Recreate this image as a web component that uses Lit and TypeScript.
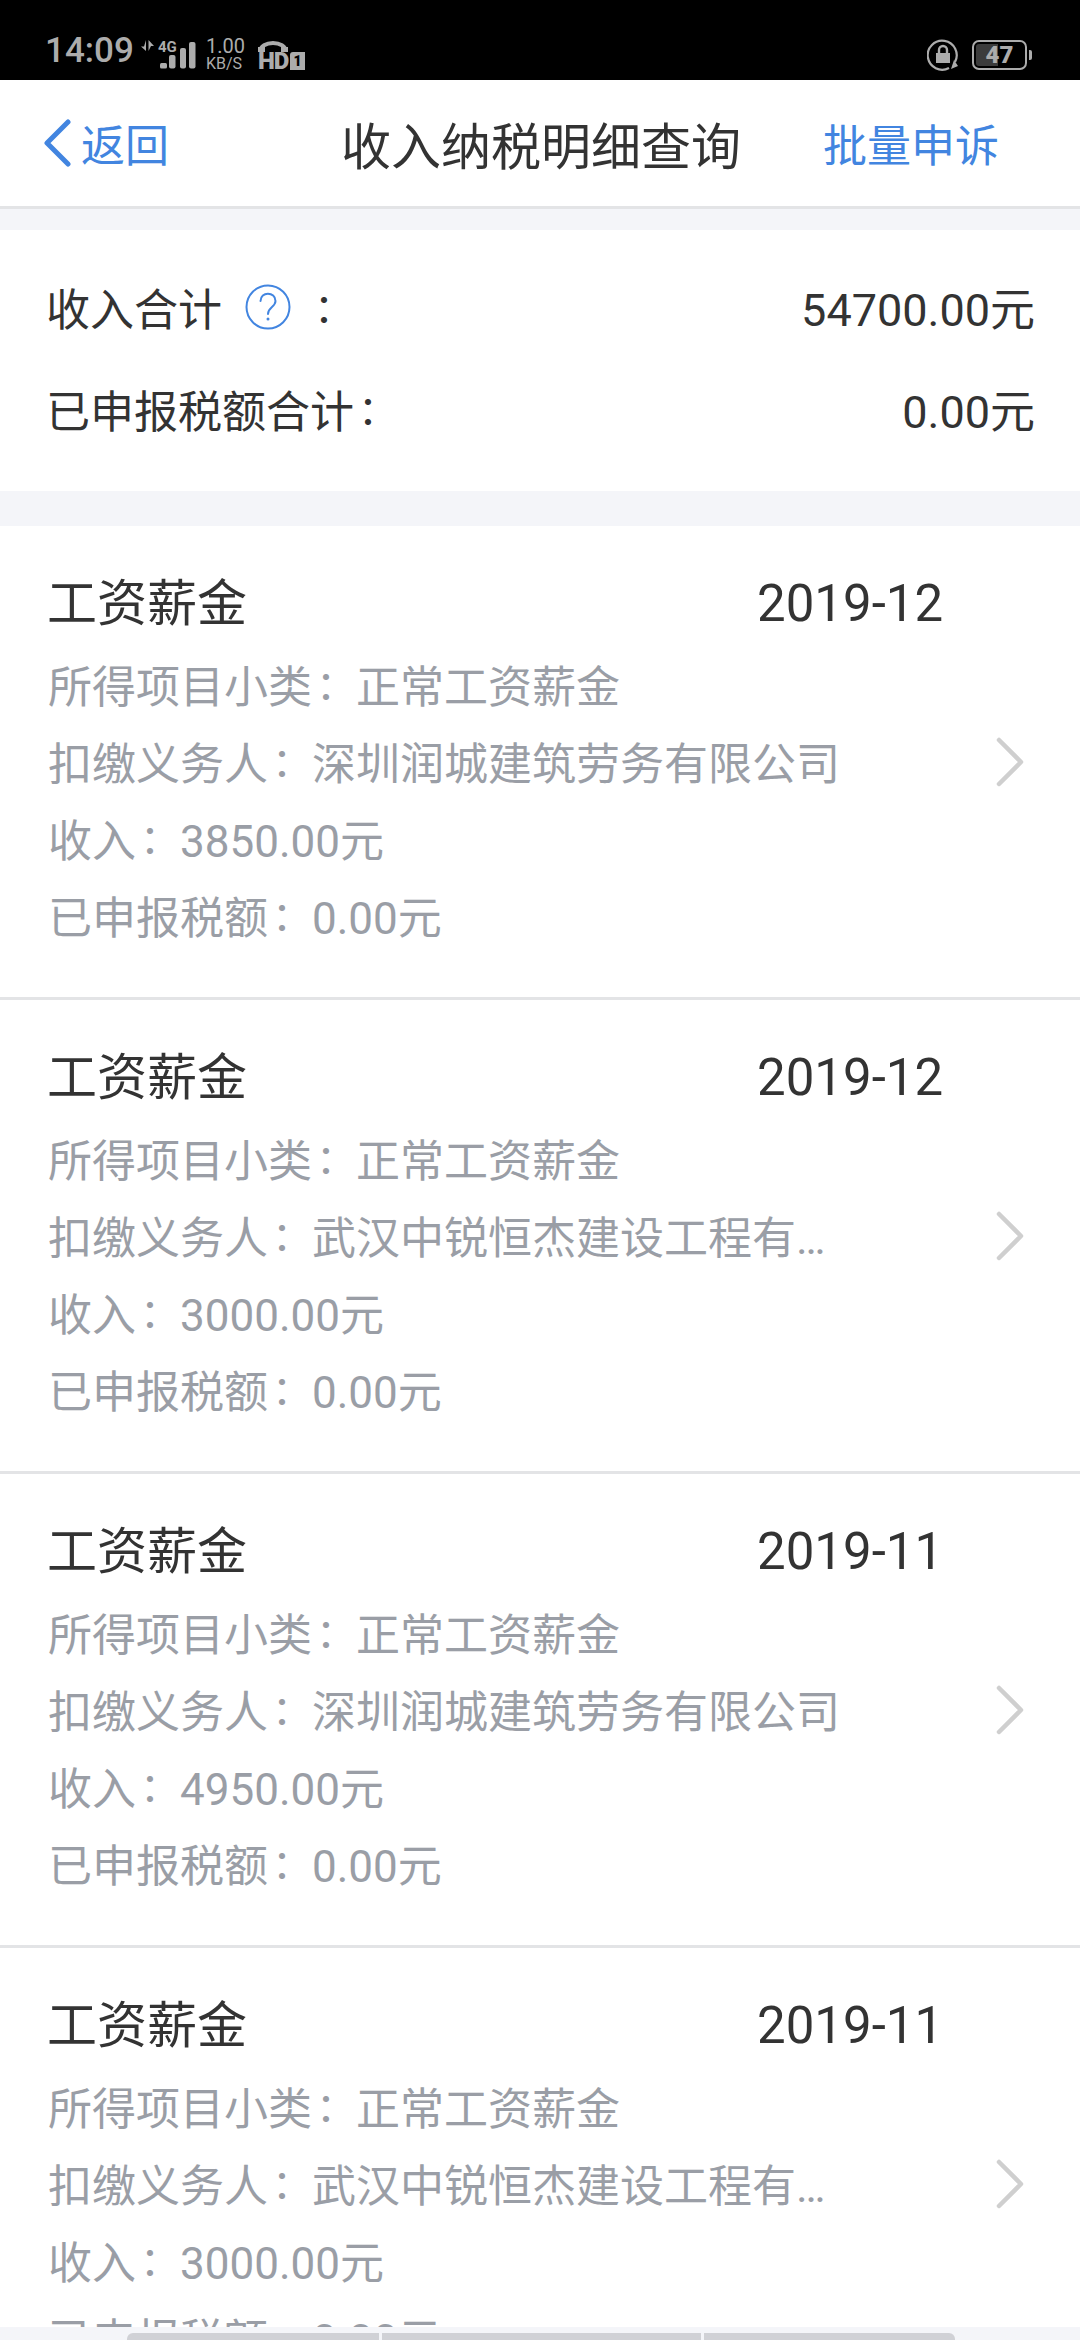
import { LitElement, html, css } from "lit";
import { customElement } from "lit/decorators.js";

interface Item { date: string; payer: string; income: string; }
const items: Item[] = [
  { date: "2019-12", payer: "深圳润城建筑劳务有限公司", income: "3850.00元" },
  { date: "2019-12", payer: "武汉中锐恒杰建设工程有限公司", income: "3000.00元" },
  { date: "2019-11", payer: "深圳润城建筑劳务有限公司", income: "4950.00元" },
  { date: "2019-11", payer: "武汉中锐恒杰建设工程有限公司", income: "3000.00元" },
];

@customElement("app-root")
export class AppRoot extends LitElement {
  static styles = css`
    :host {
      display: block; position: relative; width: 1080px; height: 2340px; overflow: hidden;
      background: #f4f5f9; color: #333;
      font-family: Roboto, "Noto Sans CJK SC", sans-serif;
    }
    .colon { font-size: 40px; margin-left: 4px; line-height: 1; vertical-align: 4px; }
    .colon-wrap { margin-top: 8px; }
    .status {
      height: 80px; background: #000; color: #acacac; display: flex; align-items: flex-end;
      justify-content: space-between; padding: 0 53px 0 45px; box-sizing: border-box;
    }
    .status-left { display: flex; align-items: flex-end; height: 80px; }
    .time { font-size: 35px; font-weight: 500; line-height: 40px; margin-bottom: 9px; width: 94px; }
    .signal { width: 60px; height: 32px; margin-bottom: 8px; position: relative; }
    .signal svg { display: block; }
    .four-g { position: absolute; left: 19px; top: -2px; font-size: 15px; font-weight: 700; line-height: 18px; }
    .speed { width: 42px; margin: 0 0 8px 7px; white-space: nowrap; }
    .speed div:first-child { font-size: 20px; line-height: 17px; }
    .speed div:last-child { font-size: 16px; line-height: 17px; }
    .hd { position: relative; width: 47px; height: 31px; margin: 0 0 10px 10px; }
    .hd-text { position: absolute; left: 0; bottom: -3px; font-size: 24px; font-weight: 900; line-height: 24px; letter-spacing: -1px; }
    .hd-arc { position: absolute; left: 0; top: 0; }
    .hd-sim {
      position: absolute; right: 0; bottom: 0; width: 15px; height: 18px; background: #acacac; color: #000;
      font-size: 14px; font-weight: 900; line-height: 18px; text-align: center; border-radius: 3px 0 0 0;
    }
    .status-right { display: flex; align-items: center; gap: 13px; height: 30px; margin-bottom: 10px; }
    .battery {
      position: relative; width: 55px; height: 30px; box-sizing: border-box; border: 2px solid #acacac;
      border-radius: 7px; text-align: center; font-size: 24px; font-weight: 900; line-height: 26px;
    }
    .battery-fill { position: absolute; left: 2px; top: 2px; bottom: 2px; width: 22px; background: #3c3c3c; border-radius: 3px 0 0 3px; }
    .battery-num { position: relative; }
    .battery-tip { position: absolute; right: -7px; top: 8px; width: 3px; height: 10px; background: #acacac; border-radius: 0 2px 2px 0; }

    .nav {
      height: 129px; box-sizing: border-box; background: #fff; border-bottom: 3px solid #e3e4e6;
      display: flex; align-items: center; justify-content: space-between; position: relative; padding: 0 81px 0 43px;
      font-size: 44px; color: #4285e0;
    }
    .back { display: flex; align-items: center; gap: 10px; }
    .nav-title {
      position: absolute; left: 341px; top: 0; bottom: 0; display: flex; align-items: center;
      font-size: 50px; color: #333;
    }
    .summary { margin-top: 21px; background: #fff; padding: 44px 45px 0 46px; height: 261px; box-sizing: border-box; font-size: 45px; }
    .sum-row { display: flex; justify-content: space-between; align-items: center; height: 65px; margin-bottom: 37px; }
    .sum-label { display: flex; align-items: center; font-size: 44px; }
    .help { margin: 0 19px 0 23px; display: block; }

    .list { margin-top: 35px; background: #fff; }
    .item {
      height: 474px; box-sizing: border-box; border-bottom: 3px solid #e3e4e6; padding: 0 0 0 48px;
      display: flex; align-items: center;
    }
    .body { flex: 1; align-self: flex-start; min-width: 0; padding-top: 42px; }
    .head { display: flex; font-size: 50px; line-height: 72px; height: 72px; margin: 0 0 10px -1px; }
    .head-title { width: 710px; }
    .date { font-size: 51px; }
    .line { font-size: 44px; line-height: 77px; color: #9a9ea6; height: 77px; }
    .line.trunc { max-width: 794px; white-space: nowrap; overflow: hidden; text-overflow: ellipsis; }
    .chev { flex: none; margin-right: 54px; display: block; }
    .bottom {
      position: absolute; left: 0; right: 0; bottom: 0; height: 13px; background: #f4f5f9;
      display: flex; justify-content: center; align-items: flex-end; gap: 3px; padding-left: 1px; box-sizing: border-box;
    }
    .seg { height: 7px; background: #d0d1d6; }
    .seg.a { width: 252px; border-radius: 6px 0 0 0; }
    .seg.b { width: 319px; }
    .seg.c { width: 251px; border-radius: 0 6px 0 0; }
  `;

  private renderItem(it: Item) {
    return html`<div class="item">
      <div class="body">
        <div class="head"><span class="head-title">工资薪金</span><span class="date">${it.date}</span></div>
        <div class="line">所得项目小类<span class="colon">\uFF1A</span>正常工资薪金</div>
        <div class="line trunc">扣缴义务人<span class="colon">\uFF1A</span>${it.payer}</div>
        <div class="line">收入<span class="colon">\uFF1A</span>${it.income}</div>
        <div class="line">已申报税额<span class="colon">\uFF1A</span>0.00元</div>
      </div>
      <svg class="chev" width="30" height="50" viewBox="0 0 30 50" fill="none">
        <path d="M3 3 L25 25 L3 47" stroke="#cfcfcf" stroke-width="4.5" stroke-linecap="round" stroke-linejoin="round"/>
      </svg>
    </div>`;
  }

  render() {
    return html`
      <div class="status">
        <div class="status-left">
          <div class="time">14:09</div>
          <div class="signal">
            <svg width="60" height="32" viewBox="0 0 60 32" fill="#acacac">
              <path d="M7 0 V11 L2 6.5 H5 Z M9.5 11 V0 L15 6 H12 Z"/>
              <rect x="21" y="23" width="7" height="5.5" rx="1.5"/>
              <rect x="30" y="15" width="6.5" height="13.5" rx="2"/>
              <rect x="41" y="8" width="6" height="20.5" rx="2"/>
              <rect x="50" y="2" width="6.5" height="26.5" rx="2"/>
            </svg>
            <span class="four-g">4G</span>
          </div>
          <div class="speed"><div>1.00</div><div>KB/S</div></div>
          <div class="hd">
            <svg class="hd-arc" width="30" height="14" viewBox="0 0 30 14" fill="none">
              <path d="M2 13 C2 1 28 1 28 13" stroke="#acacac" stroke-width="4"/>
              <rect x="0" y="8" width="7" height="5" fill="#acacac"/>
              <rect x="23" y="8" width="7" height="5" fill="#acacac"/>
            </svg>
            <span class="hd-text">HD</span>
            <span class="hd-sim">1</span>
          </div>
        </div>
        <div class="status-right">
          <svg width="32" height="32" viewBox="0 0 32 32" fill="none">
            <path d="M28 23 A14.5 14.5 0 1 0 22 29" stroke="#acacac" stroke-width="2.2"/>
            <path d="M24 30 L31 27 L27 21 Z" fill="#acacac"/>
            <rect x="9" y="14" width="14" height="10" fill="#acacac"/>
            <path d="M12 14 V11 A4 4 0 0 1 20 11 V14" stroke="#acacac" stroke-width="2.4"/>
          </svg>
          <div class="battery">
            <div class="battery-fill"></div>
            <span class="battery-num">47</span>
            <div class="battery-tip"></div>
          </div>
        </div>
      </div>
      <div class="nav">
        <div class="back">
          <svg width="28" height="48" viewBox="0 0 28 48" fill="none">
            <path d="M25 3 L4 24 L25 45" stroke="#4285e0" stroke-width="5" stroke-linecap="round" stroke-linejoin="round"/>
          </svg>
          <span>返回</span>
        </div>
        <div class="nav-title">收入纳税明细查询</div>
        <div>批量申诉</div>
      </div>
      <div class="summary">
        <div class="sum-row">
          <div class="sum-label">收入合计
            <svg class="help" width="46" height="46" viewBox="0 0 46 46" fill="none">
              <circle cx="23" cy="23" r="21.5" stroke="#4285e0" stroke-width="2"/>
              <path d="M15.5 17 C15.5 7 30.5 7.5 30.5 17 C30.5 23 23 23 23 30" stroke="#4285e0" stroke-width="2" stroke-linecap="round"/>
              <circle cx="23" cy="35" r="1.5" fill="#4285e0"/>
            </svg>
            <span class="colon-wrap"><span class="colon">\uFF1A</span></span></div>
          <div>54700.00元</div>
        </div>
        <div class="sum-row">
          <div class="sum-label"><span>已申报税额合计<span class="colon">\uFF1A</span></span></div>
          <div>0.00元</div>
        </div>
      </div>
      <div class="list">${items.map((it) => this.renderItem(it))}</div>
      <div class="bottom"><div class="seg a"></div><div class="seg b"></div><div class="seg c"></div></div>
    `;
  }
}
